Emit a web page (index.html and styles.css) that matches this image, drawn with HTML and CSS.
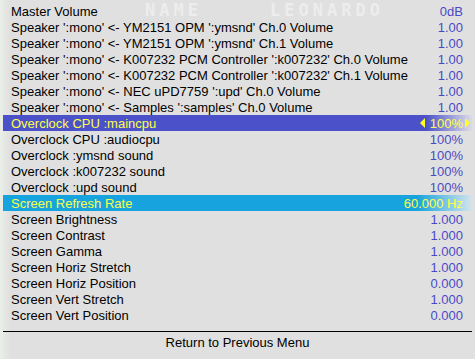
FILE: index.html
```html
<!DOCTYPE html>
<html lang="en">
<head>
  <meta charset="UTF-8">
  <title>Slider Controls</title>
  <link rel="stylesheet" href="styles.css">
</head>
<body>
  <div class="screen">
    <!-- faint game screen behind the menu -->
    <span class="ghost ghost-name">NAME</span>
    <span class="ghost ghost-player">LEONARDO</span>

    <div class="menu">
      <div class="items">
        <div class="row"><span class="label">Master Volume</span><span class="value">0dB</span></div>
        <div class="row"><span class="label">Speaker ':mono' &lt;- YM2151 OPM ':ymsnd' Ch.0 Volume</span><span class="value">1.00</span></div>
        <div class="row"><span class="label">Speaker ':mono' &lt;- YM2151 OPM ':ymsnd' Ch.1 Volume</span><span class="value">1.00</span></div>
        <div class="row"><span class="label">Speaker ':mono' &lt;- K007232 PCM Controller ':k007232' Ch.0 Volume</span><span class="value">1.00</span></div>
        <div class="row"><span class="label">Speaker ':mono' &lt;- K007232 PCM Controller ':k007232' Ch.1 Volume</span><span class="value">1.00</span></div>
        <div class="row"><span class="label">Speaker ':mono' &lt;- NEC uPD7759 ':upd' Ch.0 Volume</span><span class="value">1.00</span></div>
        <div class="row"><span class="label">Speaker ':mono' &lt;- Samples ':samples' Ch.0 Volume</span><span class="value">1.00</span></div>
        <div class="row selected"><span class="label">Overclock CPU :maincpu</span><span class="value"><i class="arrow arrow-left"></i>100%<i class="arrow arrow-right"></i></span></div>
        <div class="row"><span class="label">Overclock CPU :audiocpu</span><span class="value">100%</span></div>
        <div class="row"><span class="label">Overclock :ymsnd sound</span><span class="value">100%</span></div>
        <div class="row"><span class="label">Overclock :k007232 sound</span><span class="value">100%</span></div>
        <div class="row"><span class="label">Overclock :upd sound</span><span class="value">100%</span></div>
        <div class="row hover"><span class="label">Screen Refresh Rate</span><span class="value">60.000 Hz</span></div>
        <div class="row"><span class="label">Screen Brightness</span><span class="value">1.000</span></div>
        <div class="row"><span class="label">Screen Contrast</span><span class="value">1.000</span></div>
        <div class="row"><span class="label">Screen Gamma</span><span class="value">1.000</span></div>
        <div class="row"><span class="label">Screen Horiz Stretch</span><span class="value">1.000</span></div>
        <div class="row"><span class="label">Screen Horiz Position</span><span class="value">0.000</span></div>
        <div class="row"><span class="label">Screen Vert Stretch</span><span class="value">1.000</span></div>
        <div class="row"><span class="label">Screen Vert Position</span><span class="value">0.000</span></div>
      </div>
      <div class="footer">Return to Previous Menu</div>
    </div>
  </div>
</body>
</html>
```

FILE: styles.css
```css
body {
  margin: 0;
  background-color: #e0e0e0;
  color: #000;
  font-family: 'Liberation Sans', Arial, sans-serif;
  font-size: 13px;
}

.screen {
  position: relative;
  width: 475px;
  height: 359px;
  overflow: hidden;
  background: linear-gradient(to right, #eaefe8 0, #e0e0e0 10px);
}

.ghost {
  position: absolute;
  top: 2px;
  color: #ededed;
  font-family: 'DejaVu Sans Mono', monospace;
  font-weight: bold;
  font-size: 17px;
  line-height: 17px;
  letter-spacing: 4px;
}

.ghost-name {
  left: 145px;
}

.ghost-player {
  left: 270px;
}

.menu {
  position: relative;
  padding-top: 3px;
}

.items {
  display: flex;
  flex-direction: column;
}

.row {
  position: relative;
  display: flex;
  justify-content: space-between;
  height: 16px;
  line-height: 15px;
  padding: 1px 9px 0 8px;
  margin: 0 3px;
  box-sizing: border-box;
  white-space: nowrap;
}

.value {
  color: #4a4ac4;
}

.row.selected {
  background: linear-gradient(to right, #4b52c9 0, #4b52c9 calc(100% - 46px), #dcdce6 100%);
}

.row.hover {
  background: linear-gradient(to right, #17a3dd 0, #17a3dd calc(100% - 55px), #d4e4ec 100%);
}

.row.selected .label,
.row.selected .value,
.row.hover .label,
.row.hover .value {
  color: #ffff48;
}

.arrow {
  position: absolute;
  top: 3px;
  width: 0;
  height: 0;
  border-top: 5px solid transparent;
  border-bottom: 5px solid transparent;
}

.arrow-left {
  right: 47px;
  border-right: 5px solid #ffff20;
}

.arrow-right {
  right: 2px;
  border-left: 5px solid #ffff20;
}

.footer {
  margin: 8px 3px 0;
  border-top: 1px solid #000;
  padding-top: 3px;
  line-height: 15px;
  text-align: center;
}
```
